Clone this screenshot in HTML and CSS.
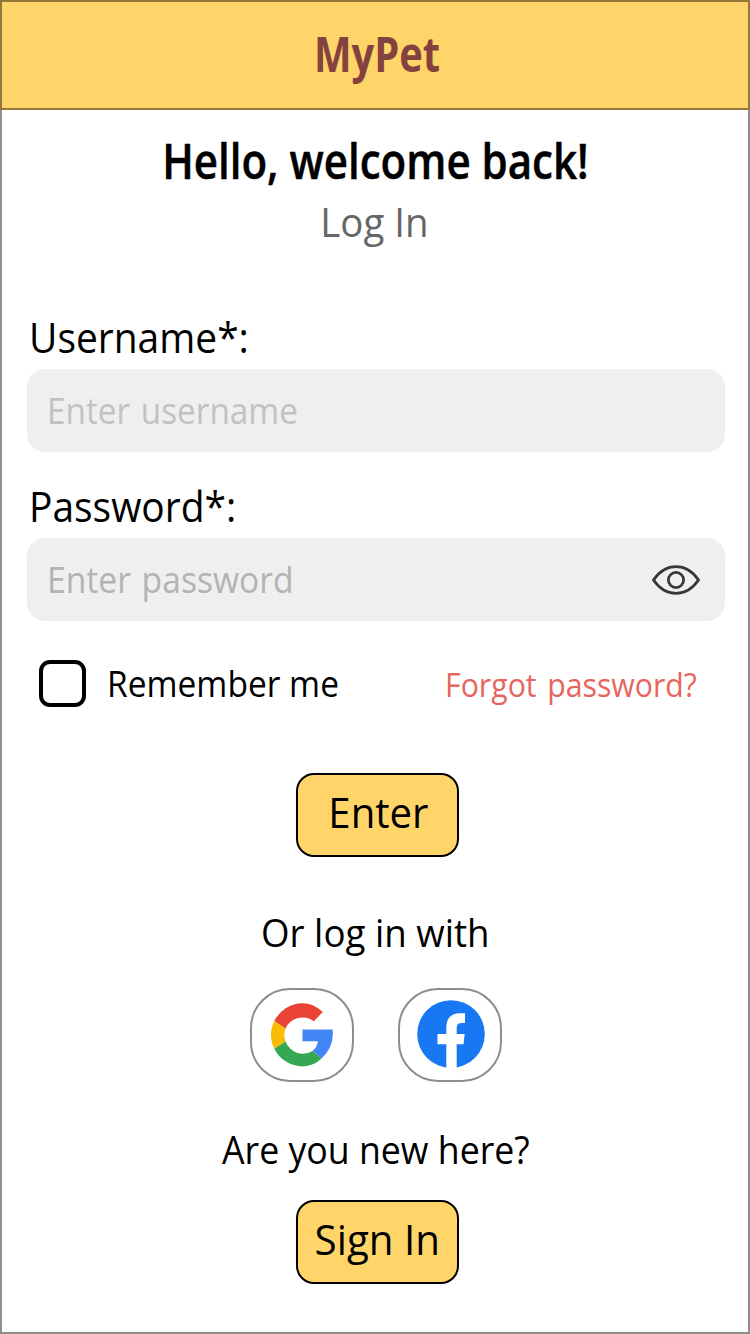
FILE: index.html
```html
<!DOCTYPE html>
<html lang="en">
<head>
<meta charset="utf-8">
<title>MyPet - Log In</title>
<link rel="stylesheet" href="styles.css">
</head>
<body>
<main class="screen">
  <header class="topbar"><span class="t brand">MyPet</span></header>
  <section class="intro">
    <h1 class="t title">Hello, welcome back!</h1>
    <p class="t subtitle">Log In</p>
  </section>
  <form class="form">
    <div class="field">
      <label class="t label label-user">Username*:</label>
      <div class="input"><span class="t hint hint-user">Enter username</span></div>
    </div>
    <div class="field">
      <label class="t label label-pass">Password*:</label>
      <div class="input"><span class="t hint hint-pass">Enter password</span>
        <svg class="eye" viewBox="0 0 48 30" fill="none" stroke="#373737" stroke-width="2.8"><path d="M1.5 15C7 7 14.5 1.7 24 1.7S41 7 46.5 15C41 23 33.5 28.3 24 28.3S7 23 1.5 15Z"/><circle cx="24" cy="15" r="7.6"/></svg>
      </div>
    </div>
    <div class="options">
      <span class="check"></span>
      <span class="t remember">Remember me</span>
      <a class="t forgot">Forgot password?</a>
    </div>
    <button type="button" class="btn"><span class="t enter">Enter</span></button>
  </form>
  <section class="social">
    <p class="t or">Or log in with</p>
    <div class="providers">
      <a class="provider"><svg class="google" viewBox="0 0 62 64"><path fill="#ea4335" d="M3.300 17.900A31.600 31.600 0 0 1 31.700 .2Q43 .3 51.800 9L42.800 18.300A18.500 18.500 0 0 0 14.500 25.500Z"/><path fill="#fbbc05" d="M3.300 17.900A31.600 31.600 0 0 0 3.300 45.700L14.500 38.500A18.500 18.500 0 0 1 14.500 25.500Z"/><path fill="#34a853" d="M3.300 45.700A31.600 31.600 0 0 0 31.700 63.400Q42.500 63.300 50.500 55.500L41.500 48A18.500 18.500 0 0 1 14.500 38.500Z"/><path fill="#4285f4" d="M31.500 26.500H61.600Q63.500 44 50.500 55.500L41.500 48Q46 44.500 47 38.300H31.500Z"/></svg></a>
      <a class="provider"><svg class="facebook" viewBox="0 0 68 69"><circle cx="34" cy="34" r="33.800" fill="#1877f2"/><path fill="#fff" d="M29.300 69V44.300H20.500V34H29.300V28Q29.300 13.300 43 13.300H48V23H44.500Q39.700 23 39.700 28V34H47.700L46.500 44.300H39.700V69Z"/></svg></a>
    </div>
  </section>
  <section class="signup">
    <p class="t new">Are you new here?</p>
    <button type="button" class="btn"><span class="t signin">Sign In</span></button>
  </section>
</main>
</body>
</html>
```
FILE: styles.css
```css
* { box-sizing: border-box; }
body { margin: 0; background: #fff; font-family: "Open Sans", sans-serif; color: #000; }
h1, p { margin: 0; }
.screen { width: 750px; height: 1334px; border: 2px solid #8f8f8f; border-top: 0; display: flex; flex-direction: column; align-items: center; }
/* Condensed type: each run carries its own horizontal scale */
.t { display: block; white-space: nowrap; line-height: 50px; flex: none; transform: scaleX(var(--sx, 1)); }
.topbar { width: 750px; height: 110px; flex: none; border: 2px solid #92783b; background: #ffd56a; display: flex; justify-content: center; padding: 27px 0 0 3px; }
.brand { font-size: 48px; font-weight: 700; color: #84423f; --sx: .83; }
.intro { display: flex; flex-direction: column; align-items: center; padding-top: 26px; }
.title { font-size: 48px; font-weight: 600; -webkit-text-stroke: .5px #000; --sx: .876; }
.subtitle { font-size: 40px; color: #666; margin: 11px 2px 0 0; --sx: .96; }
.form { width: 698px; margin: 65px 0 0 2px; display: flex; flex-direction: column; align-items: center; }
.field { width: 100%; height: 169px; }
.label, .hint, .remember { transform-origin: 0 50%; }
.label { font-size: 42px; height: 57px; margin-left: 2px; --sx: .927; }
.input { height: 83px; border-radius: 18px; background: #efefef; display: flex; align-items: center; justify-content: space-between; padding: 0 25px 0 20px; }
.hint { font-size: 36px; word-spacing: 2px; }
.hint-user { color: #c2c2c2; --sx: .926; }
.hint-pass { color: #b3b3b3; --sx: .935; }
.eye { width: 48px; height: 30px; flex: none; margin-top: 1px; }
.options { width: 100%; height: 46px; display: flex; align-items: center; padding: 0 28px 0 12px; margin-top: 10px; }
.check { width: 47px; height: 47px; border: 4px solid #000; border-radius: 11px; }
.remember { font-size: 36px; margin: 2px 0 0 21px; --sx: .931; }
.forgot { font-size: 33px; color: #e6665e; margin: 4px 0 0 auto; transform-origin: 100% 50%; word-spacing: 3px; --sx: .916; }
.btn { width: 163px; height: 84px; padding: 0 0 5px; border: 2px solid #000; border-radius: 18px; background: #ffd56a; display: flex; align-items: center; justify-content: center; font-family: inherit; color: #000; }
.form .btn { margin-top: 67px; margin-left: 2px; padding: 0 0 6px 2px; }
.enter, .signin { font-size: 42px; }
.enter { --sx: .955; }
.signin { --sx: .96; }
.social { display: flex; flex-direction: column; align-items: center; margin-top: 50px; }
.or, .new { font-size: 38px; }
.or { --sx: .966; }
.new { margin-left: 2px; --sx: .939; }
.providers { display: flex; gap: 44px; margin: 31px 0 0 2px; }
.provider { width: 104px; height: 94px; border: 2px solid #8d8d8d; border-radius: 40px; display: flex; align-items: center; justify-content: center; }
.google { width: 62px; height: 64px; }
.facebook { width: 68px; height: 69px; margin: 0 0 2px 2px; }
.signup { display: flex; flex-direction: column; align-items: center; margin-top: 42px; }
.signup .btn { margin: 26px 0 0 4px; padding-bottom: 6px; }
```
